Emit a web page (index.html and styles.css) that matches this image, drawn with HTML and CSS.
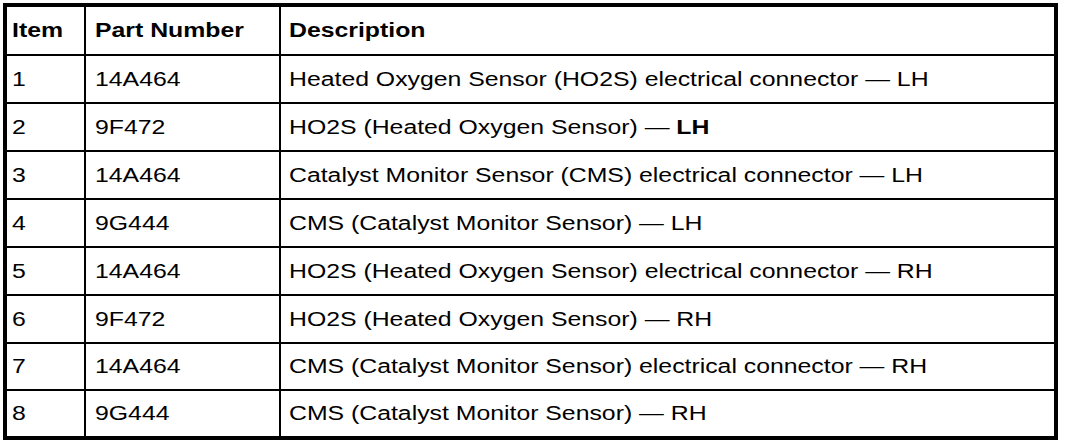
FILE: index.html
```html
<!DOCTYPE html>
<html>
<head>
<meta charset="utf-8">
<link rel="stylesheet" href="styles.css">
</head>
<body>
<table class="parts">
  <colgroup>
    <col class="c-item">
    <col class="c-part">
    <col class="c-desc">
  </colgroup>
  <thead>
    <tr class="head"><th><span class="t">Item</span></th><th><span class="t">Part Number</span></th><th><span class="t">Description</span></th></tr>
  </thead>
  <tbody>
    <tr><td><span class="t">1</span></td><td><span class="t">14A464</span></td><td><span class="t">Heated Oxygen Sensor (HO2S) electrical connector — LH</span></td></tr>
    <tr><td><span class="t">2</span></td><td><span class="t">9F472</span></td><td><span class="t">HO2S (Heated Oxygen Sensor) — <b>LH</b></span></td></tr>
    <tr><td><span class="t">3</span></td><td><span class="t">14A464</span></td><td><span class="t">Catalyst Monitor Sensor (CMS) electrical connector — LH</span></td></tr>
    <tr><td><span class="t">4</span></td><td><span class="t">9G444</span></td><td><span class="t">CMS (Catalyst Monitor Sensor) — LH</span></td></tr>
    <tr><td><span class="t">5</span></td><td><span class="t">14A464</span></td><td><span class="t">HO2S (Heated Oxygen Sensor) electrical connector — RH</span></td></tr>
    <tr><td><span class="t">6</span></td><td><span class="t">9F472</span></td><td><span class="t">HO2S (Heated Oxygen Sensor) — RH</span></td></tr>
    <tr class="r7"><td><span class="t">7</span></td><td><span class="t">14A464</span></td><td><span class="t">CMS (Catalyst Monitor Sensor) electrical connector — RH</span></td></tr>
    <tr class="last"><td><span class="t">8</span></td><td><span class="t">9G444</span></td><td><span class="t">CMS (Catalyst Monitor Sensor) — RH</span></td></tr>
  </tbody>
</table>
</body>
</html>
```
FILE: styles.css
```css
html, body {
  margin: 0;
  background: #fff;
}
body {
  padding: 3px 0 0 3px;
  font-family: "Liberation Sans", Arial, sans-serif;
  font-size: 20px;
  color: #000;
}
.parts {
  border: 4px solid #000;
  border-collapse: separate;
  border-spacing: 0;
  width: 1055px;
  table-layout: fixed;
}
.c-item { width: 79px; }
.c-part { width: 195px; }
.c-desc { width: auto; }
.parts th, .parts td {
  padding: 0 0 0 7px;
  text-align: left;
  vertical-align: middle;
  border-right: 2px solid #000;
  border-bottom: 2px solid #000;
  box-sizing: border-box;
  white-space: nowrap;
}
.t {
  display: inline-block;
  transform: scaleX(1.24);
  transform-origin: left center;
}
.parts th {
  font-weight: bold;
  height: 49px;
}
.parts th:last-child, .parts td:last-child {
  border-right: none;
}
.parts td:first-child, .parts th:first-child { padding-left: 5px; }
.parts td:nth-child(2), .parts th:nth-child(2) { padding-left: 9px; }
.parts td:nth-child(3), .parts th:nth-child(3) { padding-left: 8px; }
.parts tbody td { height: 48px; }
.parts tbody tr.r7 td { height: 47px; }
.parts tbody tr.last td {
  border-bottom: none;
  height: 45px;
}
```
